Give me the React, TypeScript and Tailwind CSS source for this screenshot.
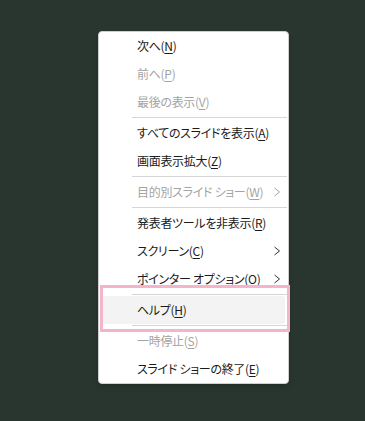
import React from 'react';

type Item =
  | { kind: 'sep' }
  | { kind: 'item'; label: string; key: string; disabled?: boolean; sub?: boolean; hover?: boolean };

const items: Item[] = [
  { kind: 'item', label: '次へ', key: 'N' },
  { kind: 'item', label: '前へ', key: 'P', disabled: true },
  { kind: 'item', label: '最後の表示', key: 'V', disabled: true },
  { kind: 'sep' },
  { kind: 'item', label: 'すべてのスライドを表示', key: 'A' },
  { kind: 'item', label: '画面表示拡大', key: 'Z' },
  { kind: 'sep' },
  { kind: 'item', label: '目的別スライド ショー', key: 'W', disabled: true, sub: true },
  { kind: 'sep' },
  { kind: 'item', label: '発表者ツールを非表示', key: 'R' },
  { kind: 'item', label: 'スクリーン', key: 'C', sub: true },
  { kind: 'item', label: 'ポインター オプション', key: 'O', sub: true },
  { kind: 'sep' },
  { kind: 'item', label: 'ヘルプ', key: 'H', hover: true },
  { kind: 'sep' },
  { kind: 'item', label: '一時停止', key: 'S', disabled: true },
  { kind: 'item', label: 'スライド ショーの終了', key: 'E' },
];

const Chevron = ({ disabled }: { disabled?: boolean }) => (
  <svg width="8" height="10" viewBox="0 0 8 10" className={disabled ? 'text-[#a6a6a6]' : 'text-[#333333]'}>
    <polyline points="1.5,1 6.5,5 1.5,9" fill="none" stroke="currentColor" strokeWidth="1" />
  </svg>
);

export default function App() {
  return (
    <div className="w-[365px] h-[421px] bg-[#29352f] pt-[31px] pl-[98px] overflow-hidden">
      <div
        className="relative w-[191px] bg-white border border-[#cfcfcf] rounded-[4px] shadow-md"
        style={{ fontFamily: '"Noto Sans CJK JP", "Noto Sans", sans-serif' }}
      >
        {items.map((it, i) =>
          it.kind === 'sep' ? (
            <div key={i} className="h-[3px] flex items-center pl-[33px] pr-[1px]">
              <div className="h-px w-full bg-[#d6d6d6]" />
            </div>
          ) : (
            <div
              key={i}
              className={`h-[28px] flex items-center text-[12px] tracking-[-0.3px] [font-feature-settings:'palt'] ${
                it.disabled ? 'text-[#a3a3a3]' : 'text-[#1b1b1b]'
              } ${it.hover ? 'bg-[#f3f3f3] mx-[3px] pl-[35px] pr-[4px] rounded-[3px]' : 'pl-[38px] pr-[7px]'}`}
            >
              <span className="flex-1 whitespace-nowrap leading-none">
                {it.label}(<span className="underline underline-offset-2">{it.key}</span>)
              </span>
              {it.sub && <Chevron disabled={it.disabled} />}
            </div>
          )
        )}
        <div className="absolute left-[1px] top-[253px] w-[190px] h-[47px] border-[3px] border-[#f4b4ca] pointer-events-none" />
      </div>
    </div>
  );
}
